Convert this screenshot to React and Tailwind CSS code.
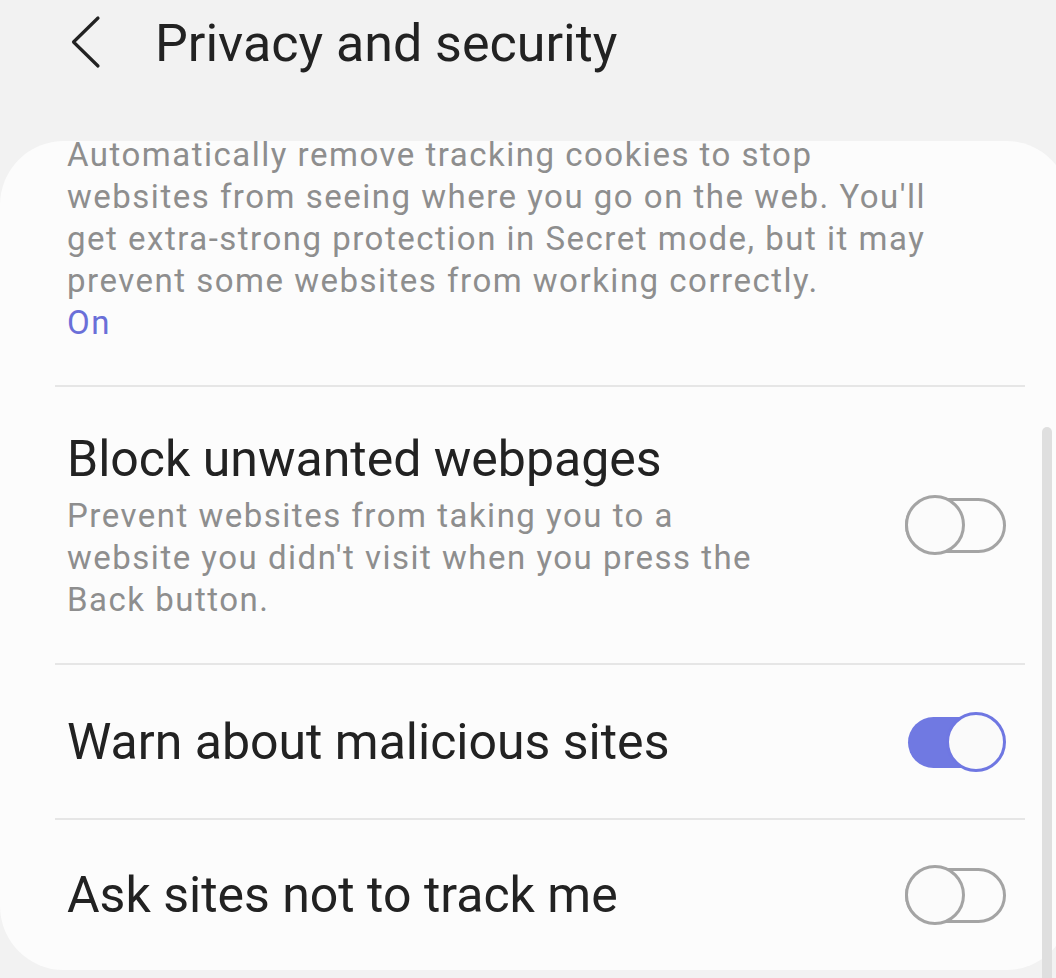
import React from "react";

function Toggle({ on }) {
  if (on) {
    return (
      <div className="relative w-[100px] h-[60px] shrink-0">
        <div className="absolute left-[2px] right-[6px] top-[5px] h-[51px] rounded-full bg-[#7079e2]"></div>
        <div className="absolute right-0 top-0 w-[60px] h-[60px] rounded-full border-[3px] border-[#6f77e2] bg-[#fafafa]"></div>
      </div>
    );
  }
  return (
    <div className="relative w-[101px] h-[60px] shrink-0">
      <div className="absolute left-0 right-0 top-[3px] h-[55px] rounded-full border-[3px] border-[#a4a4a4]"></div>
      <div className="absolute left-0 top-0 w-[60px] h-[60px] rounded-full border-[3px] border-[#a4a4a4] bg-[#fbfbfb]"></div>
    </div>
  );
}

export default function App() {
  return (
    <div className="relative w-[1056px] h-[978px] overflow-hidden bg-[#f2f2f2] font-['Roboto',sans-serif]">
      {/* Header */}
      <div className="h-[141px] flex items-start">
        <svg className="mt-[15px] ml-[68px]" width="34" height="54" viewBox="0 0 34 54" fill="none">
          <path d="M30 3 L5.5 27 L30 51" stroke="#222" strokeWidth="3.2" strokeLinecap="round" strokeLinejoin="round" />
        </svg>
        <h1 className="ml-[53px] mt-[18px] text-[52px] leading-[52px] text-[#222] font-normal">Privacy and security</h1>
      </div>

      {/* Card */}
      <div className="flow-root w-[1070px] h-[829px] rounded-[64px] bg-[#fcfcfc]">
        <div className="ml-[55px] w-[970px]">
          <div className="pl-[12px] -mt-[7px] pb-[41px] text-[33px] leading-[42px] tracking-[1.5px] text-[#8e8e8e]">
            <p>
              Automatically remove tracking cookies to stop<br />
              websites from seeing where you go on the web. You'll<br />
              get extra-strong protection in Secret mode, but it may<br />
              prevent some websites from working correctly.
            </p>
            <p className="text-[#6a6fd8]">On</p>
          </div>

          <div className="border-t-2 border-[#e6e6e6] h-[278px] pl-[12px] pr-[19px] flex items-center justify-between">
            <div>
              <div className="text-[50px] leading-[58px] text-[#222]">Block unwanted webpages</div>
              <div className="mt-[7px] text-[33px] leading-[42px] tracking-[1.5px] text-[#8e8e8e]">
                Prevent websites from taking you to a<br />
                website you didn't visit when you press the<br />
                Back button.
              </div>
            </div>
            <Toggle on={false} />
          </div>

          <div className="border-t-2 border-[#e6e6e6] h-[155px] pl-[12px] pr-[19px] flex items-center justify-between">
            <div className="text-[50px] leading-[58px] text-[#222]">Warn about malicious sites</div>
            <Toggle on={true} />
          </div>

          <div className="border-t-2 border-[#e6e6e6] h-[152px] pl-[12px] pr-[19px] flex items-center justify-between">
            <div className="text-[50px] leading-[58px] text-[#222]">Ask sites not to track me</div>
            <Toggle on={false} />
          </div>
        </div>
      </div>

      {/* Scrollbar */}
      <div className="absolute right-[4px] top-[427px] bottom-0 w-[10px] rounded-t-full bg-[#dfdfdf]"></div>
    </div>
  );
}
